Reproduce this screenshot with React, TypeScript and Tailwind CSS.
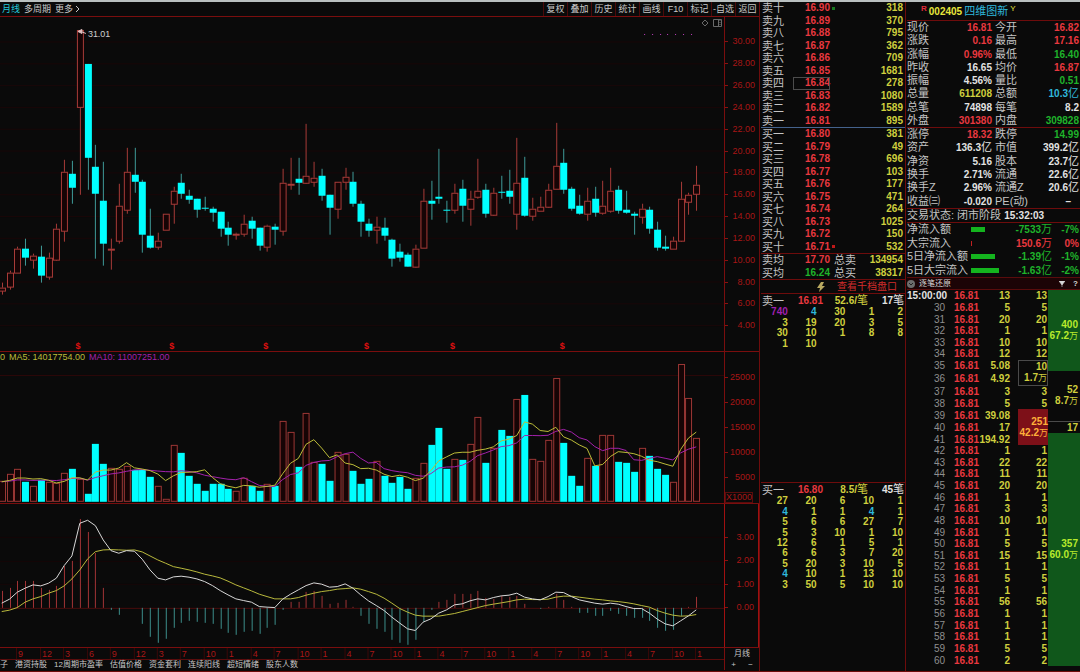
import React from "react";

const FONT = "font-['Liberation_Sans','Noto_Sans_CJK_SC',sans-serif]";

// x of the n-th monthly bar
const STEP = 7.815;
const barX = (i: number) => 1.7 + STEP * i;

// [up, high, body top, body bottom, low, volume height]
const candles: [number, number, number, number, number, number][] = [
  [1, 283, 288, 291, 295, 20],
  [1, 271, 273, 287, 290, 27],
  [1, 247, 249, 273, 273, 32],
  [0, 239, 249, 258, 266, 20],
  [1, 254, 256, 260, 269, 15],
  [0, 246, 257, 276, 283, 22],
  [1, 253, 258, 277, 280, 19],
  [1, 224, 229, 260, 261, 18],
  [1, 160, 172, 231, 242, 28],
  [0, 161, 174, 188, 204, 33],
  [1, 30, 30, 107, 195, 22],
  [0, 64, 64, 158, 190, 8],
  [0, 145, 167, 194, 259, 58],
  [0, 162, 201, 244, 266, 38],
  [1, 239, 249, 249, 270, 33],
  [1, 184, 206, 241, 244, 32],
  [1, 148, 172, 210, 214, 35],
  [0, 148, 175, 182, 193, 32],
  [0, 180, 182, 235, 253, 32],
  [0, 209, 236, 248, 249, 25],
  [1, 233, 241, 247, 250, 15],
  [1, 214, 214, 230, 230, 2],
  [1, 187, 191, 204, 224, 56],
  [0, 174, 183, 194, 199, 49],
  [0, 190, 196, 200, 204, 26],
  [0, 199, 199, 210, 218, 18],
  [0, 197, 208, 209, 211, 11],
  [0, 207, 209, 213, 222, 18],
  [0, 212, 212, 229, 237, 18],
  [0, 222, 228, 235, 246, 13],
  [1, 233, 234, 235, 240, 10],
  [1, 215, 224, 234, 237, 23],
  [0, 217, 221, 229, 239, 16],
  [0, 228, 228, 246, 251, 11],
  [1, 225, 226, 247, 252, 17],
  [0, 224, 227, 230, 245, 16],
  [1, 169, 183, 231, 236, 80],
  [1, 158, 184, 184, 190, 69],
  [0, 158, 179, 183, 195, 35],
  [1, 124, 176, 183, 184, 88],
  [1, 162, 178, 182, 187, 39],
  [0, 169, 176, 196, 201, 38],
  [0, 195, 195, 208, 235, 21],
  [1, 182, 182, 209, 219, 49],
  [1, 168, 177, 182, 190, 47],
  [0, 172, 182, 204, 207, 31],
  [0, 201, 204, 222, 237, 18],
  [0, 219, 224, 231, 237, 23],
  [1, 217, 227, 230, 244, 40],
  [0, 218, 228, 236, 241, 26],
  [0, 239, 240, 259, 267, 19],
  [0, 244, 252, 258, 262, 25],
  [0, 253, 255, 267, 267, 13],
  [1, 245, 249, 267, 268, 23],
  [1, 189, 201, 248, 248, 38],
  [0, 181, 201, 204, 220, 57],
  [0, 149, 197, 199, 204, 74],
  [0, 201, 210, 211, 223, 33],
  [1, 184, 193, 210, 214, 42],
  [0, 180, 189, 206, 222, 42],
  [1, 191, 199, 209, 226, 57],
  [1, 159, 191, 197, 199, 84],
  [0, 184, 190, 214, 218, 39],
  [1, 188, 193, 215, 216, 53],
  [0, 176, 192, 193, 199, 72],
  [0, 170, 191, 197, 204, 66],
  [1, 138, 183, 214, 230, 102],
  [0, 157, 178, 216, 217, 107],
  [1, 198, 209, 216, 221, 42],
  [1, 197, 207, 211, 211, 40],
  [1, 184, 190, 207, 208, 61],
  [1, 123, 166, 189, 189, 123],
  [0, 149, 163, 190, 194, 59],
  [0, 187, 189, 209, 211, 26],
  [0, 195, 206, 214, 215, 16],
  [1, 188, 201, 214, 221, 43],
  [0, 187, 199, 213, 217, 36],
  [1, 181, 206, 213, 215, 66],
  [1, 168, 191, 211, 213, 66],
  [0, 186, 190, 211, 214, 40],
  [0, 191, 210, 213, 214, 39],
  [0, 212, 214, 216, 235, 30],
  [1, 204, 209, 217, 224, 53],
  [0, 207, 210, 229, 234, 46],
  [0, 222, 230, 248, 251, 33],
  [0, 236, 247, 249, 251, 27],
  [1, 237, 241, 249, 249, 19],
  [1, 182, 199, 241, 242, 137],
  [1, 193, 195, 202, 215, 103],
  [1, 166, 185, 194, 211, 63],
];

const macd = [
  17, 20, 27, 27, 27, 20, 18, 22, 42, 47, 89, 76, 55, 20, -2, -7, 0, 0, -16, -29, -35, -31, -20, -15, -13, -14, -15,
  -16, -21, -25, -27, -24, -23, -26, -20, -17, -2, 6, 6, 16, 17, 12, 4, 5, 8, 1, -8, -16, -21, -24, -32, -35, -37, -32,
  -14, -2, 6, 8, 14, 14, 14, 17, 10, 9, 12, 11, 12, 4, 0, -1, 1, 14, 8, 1, -5, -5, -8, -8, -3, -6, -8, -10, -10, -13,
  -20, -23, -22, -8, 1, 11,
];

// DIF and DEA in thirds of a unit above the zero line
const dif = [
  14, 26, 47, 59, 69, 66, 74, 89, 127, 156, 254, 263, 247, 204, 172, 164, 172, 170, 146, 114, 89, 84, 93, 95, 92, 87,
  79, 67, 52, 39, 27, 22, 17, 4, 2, 1, 26, 41, 54, 67, 75, 71, 62, 64, 72, 59, 39, 21, 7, -8, -28, -46, -63, -68, -43,
  -33, -16, -6, 9, 12, 21, 27, 24, 31, 36, 38, 44, 32, 27, 24, 34, 47, 46, 34, 24, 19, 14, 11, 14, 11, 4, -2, -2, -16,
  -34, -48, -54, -39, -24, -6,
];
const dea = [
  -11, -7, 1, 17, 27, 34, 44, 52, 66, 87, 114, 147, 169, 174, 175, 174, 173, 174, 168, 156, 144, 134, 124, 119, 114,
  108, 101, 96, 90, 80, 69, 60, 51, 41, 34, 27, 27, 27, 31, 38, 44, 49, 52, 56, 58, 60, 56, 49, 41, 29, 14, -2, -13,
  -22, -25, -25, -25, -21, -17, -11, -5, 1, 7, 11, 15, 19, 24, 26, 25, 25, 26, 32, 35, 35, 32, 29, 26, 24, 21, 19, 16,
  12, 7, 2, -8, -16, -22, -25, -24, -20,
];

const months = ["9", "12", "3", "6", "9", "12", "3", "7", "10", "1", "4", "7", "10", "1", "4", "7", "10", "1", "4", "7", "10", "1", "4", "7", "10", "1", "4", "7", "10", "1"];

const volumes = candles.map((c) => c[5]);

function movingAverage(n: number) {
  return volumes.map((_, i) => {
    let sum = 0;
    for (let k = i - n + 1; k <= i; k++) sum += k < 0 ? 20 : volumes[k];
    return sum / n;
  });
}

const line = (ys: number[]) => ys.map((y, i) => `${barX(i).toFixed(1)},${y.toFixed(1)}`).join(" ");

const priceTicks = ["30.00", "28.00", "26.00", "24.00", "22.00", "20.00", "18.00", "16.00", "14.00", "12.00", "10.00", "8.00", "6.00", "4.00"];
const toolbar = ["复权", "叠加", "历史", "统计", "画线", "F10", "标记", "-自选", "返回"];
const indicators = ["港资持股", "12周期市盈率", "估值价格", "资金套利", "连续阳线", "超短情绪", "股东人数"];

const asks = [
  ["卖十", "16.90", "318"],
  ["卖九", "16.89", "370"],
  ["卖八", "16.88", "795"],
  ["卖七", "16.87", "362"],
  ["卖六", "16.86", "709"],
  ["卖五", "16.85", "1681"],
  ["卖四", "16.84", "278"],
  ["卖三", "16.83", "1080"],
  ["卖二", "16.82", "1589"],
  ["卖一", "16.81", "895"],
];
const bids = [
  ["买一", "16.80", "381"],
  ["买二", "16.79", "49"],
  ["买三", "16.78", "696"],
  ["买四", "16.77", "103"],
  ["买五", "16.76", "177"],
  ["买六", "16.75", "471"],
  ["买七", "16.74", "264"],
  ["买八", "16.73", "1025"],
  ["买九", "16.72", "150"],
  ["买十", "16.71", "532"],
];

const askQueue = [
  ["740", "4", "30", "1", "2"],
  ["3", "19", "20", "3", "5"],
  ["30", "10", "1", "8", "8"],
  ["1", "10", "", "", ""],
];
const bidQueue = [
  ["27", "20", "6", "10", "1"],
  ["4", "1", "1", "4", "1"],
  ["5", "6", "6", "27", "7"],
  ["5", "3", "10", "1", "10"],
  ["12", "6", "1", "5", "1"],
  ["6", "6", "3", "7", "20"],
  ["5", "20", "3", "10", "5"],
  ["4", "10", "1", "13", "10"],
  ["3", "50", "5", "10", "10"],
];

const RED = "text-[#e8383f]";
const GREEN = "text-[#1fb32a]";
const YELLOW = "text-[#cfcf3e]";
const WHITE = "text-[#e2e2e2]";
const CYAN = "text-[#2fb8dc]";
const LABEL = "text-[11px] font-normal text-[#c4c4c4]";

const quoteTop = [
  ["现价", "16.81", RED, "今开", "16.82", RED],
  ["涨跌", "0.16", RED, "最高", "17.16", RED],
  ["涨幅", "0.96%", RED, "最低", "16.40", GREEN],
  ["昨收", "16.65", WHITE, "均价", "16.87", RED],
  ["振幅", "4.56%", WHITE, "量比", "0.51", GREEN],
  ["总量", "611208", YELLOW, "总额", "10.3亿", CYAN],
  ["总笔", "74898", WHITE, "每笔", "8.2", WHITE],
  ["外盘", "301380", RED, "内盘", "309828", GREEN],
];
const quoteBottom = [
  ["涨停", "18.32", RED, "跌停", "14.99", GREEN],
  ["资产", "136.3亿", WHITE, "市值", "399.2亿", WHITE],
  ["净资", "5.16", WHITE, "股本", "23.7亿", WHITE],
  ["换手", "2.71%", WHITE, "流通", "22.6亿", WHITE],
  ["换手Z", "2.96%", WHITE, "流通Z", "20.6亿", WHITE],
  ["收益㈢", "-0.020", WHITE, "PE(动)", "–", `${WHITE} pr-2`],
];
const flows = [
  { label: "净流入额", bar: "w-3.5 bg-[#14b41e]", value: "-7533万", pct: "-7%", color: GREEN },
  { label: "大宗流入", bar: "w-px bg-[#c02020]", value: "150.6万", pct: "0%", color: RED },
  { label: "5日净流入额", bar: "w-6 bg-[#14b41e]", value: "-1.39亿", pct: "-1%", color: GREEN },
  { label: "5日大宗流入", bar: "w-7 bg-[#14b41e]", value: "-1.63亿", pct: "-2%", color: GREEN },
];

const ticks = [
  ["15:00:00", "13"], ["30", "5"], ["31", "20"], ["32", "1"], ["33", "10"], ["34", "12"], ["35", "5.08"], ["36", "4.92"],
  ["37", "3"], ["38", "5"], ["39", "39.08"], ["40", "17"], ["41", "194.92"], ["42", "1"], ["43", "22"], ["44", "11"],
  ["45", "20"], ["46", "1"], ["47", "3"], ["48", "10"], ["49", "1"], ["50", "5"], ["51", "15"], ["52", "1"],
  ["53", "5"], ["54", "1"], ["55", "56"], ["56", "1"], ["57", "1"], ["58", "1"], ["59", "5"], ["60", "2"],
];

type Block = { span: number; qty: string; amount: string; box: string };

// orders merged over several ticks, keyed by the row they start on
const merged: Record<number, Block> = {
  6: { span: 2, qty: "10", amount: "1.7万", box: "border border-[#4a4a4a]" },
  10: { span: 3, qty: "251", amount: "42.2万", box: "bg-[#7d1018] text-[#ffb03a]" },
};
const covered = [7, 11, 12];
const groups: Record<number, Block> = {
  0: { span: 7, qty: "400", amount: "67.2万", box: "bg-[#10571b] text-[#b8ea2c]" },
  7: { span: 4, qty: "52", amount: "8.7万", box: "border-b border-[#4a4a4a] text-[#cfcf3e]" },
  11: { span: 1, qty: "17", amount: "", box: "text-[#cfcf3e]" },
  12: { span: 20, qty: "357", amount: "60.0万", box: "bg-[#10571b] text-[#b8ea2c]" },
};

// digits stay bold, the trailing unit is drawn lighter
function Num({ children, unit = "text-[11px]" }: { children: string; unit?: string }) {
  const m = children.match(/^(.*?)([万亿笔]?)$/);
  return (
    <>
      {m ? m[1] : children}
      {m && m[2] && <span className={`font-normal ${unit}`}>{m[2]}</span>}
    </>
  );
}

function Axis({ labels, className }: { labels: string[]; className: string }) {
  return (
    <div className={`flex flex-col ${className}`}>
      {labels.map((l) => (
        <div key={l} className="flex flex-1 items-center justify-between pr-1 text-[9px] leading-none text-[#a81616]">
          <span className="h-px w-[3px] bg-[#8c1010]" />
          {l}
        </div>
      ))}
    </div>
  );
}

function PriceChart() {
  return (
    <svg className="block min-w-0 flex-1" viewBox="0 17 725 334" preserveAspectRatio="xMaxYMin meet" role="img" aria-label="月线">
      {priceTicks.map((t, i) => (
        <line key={t} x1="0" x2="725" y1={42 + i * 21.85} y2={42 + i * 21.85} stroke="#190708" />
      ))}
      {candles.map(([up, high, top, bottom, low], i) => {
        const x = Math.round(barX(i));
        const body = Math.max(bottom - top, 1);
        return up ? (
          <g key={i} stroke="#a83b38" fill="none">
            <path d={`M${x + 0.5} ${high}V${top}M${x + 0.5} ${bottom}V${low}`} />
            <rect x={x - 2.5} y={top + 0.5} width="6" height={body} fill="#160405" />
          </g>
        ) : (
          <g key={i}>
            <path d={`M${x + 0.5} ${high}V${low}`} stroke="#3f9c9a" />
            <rect x={x - 3} y={top} width="7" height={body} fill="#00ffff" />
          </g>
        );
      })}
      <path d="M78 31.5l4-2v4zM81 31.5l5 2" stroke="#e0c0c0" fill="#e0c0c0" />
      <text x="88" y="37" className="fill-[#cfcfcf] text-[9px]">31.01</text>
      {[0, 1, 2, 3, 4, 5, 6].map((k) => (
        <rect key={k} x={645 + Math.round(k * 7.8)} y="34" width="1" height="1" fill="#c040c0" />
      ))}
      <path d="M706 20l3 3-3 3-3-3z" fill="none" stroke="#6a6a6a" />
      <path d="M714.5 19.5h8v7h-8zM719.5 19.5v7" fill="none" stroke="#6a6a6a" />
      <path d="M721 20v6" stroke="#6a6a6a" strokeDasharray="1 1" />
      {[78, 172, 266, 367, 453, 563].map((x) => (
        <text key={x} x={x} y="349" textAnchor="middle" className="fill-[#e01010] text-[9px] font-bold">$</text>
      ))}
    </svg>
  );
}

function VolumeChart() {
  return (
    <svg className="block min-w-0 flex-1" viewBox="0 352 725 151" preserveAspectRatio="xMaxYMin meet" role="img" aria-label="成交量">
      <path d="M0 375.5H725" stroke="#2c0809" />
      {candles.map(([up, , , , , vol], i) => {
        const x = Math.round(barX(i));
        return up ? (
          <rect key={i} x={x - 2.5} y={502 - vol - 0.5} width="6" height={vol} fill="#160405" stroke="#9c3735" />
        ) : (
          <rect key={i} x={x - 3} y={502 - vol} width="7" height={vol} fill="#00ffff" />
        );
      })}
      <polyline points={line(movingAverage(10).map((v) => 502 - v))} fill="none" stroke="#a321ab" />
      <polyline points={line(movingAverage(5).map((v) => 502 - v))} fill="none" stroke="#bcbc38" />
    </svg>
  );
}

function MacdChart() {
  return (
    <svg className="block min-w-0 flex-1" viewBox="0 504 725 144" preserveAspectRatio="xMaxYMin meet" role="img" aria-label="MACD">
      <path d="M0 608.5H725" stroke="#4a0c0c" />
      <path d="M0 537.5H725M0 561.5H725M0 584.5H725" stroke="#150607" />
      {macd.map((v, i) => (
        <path key={i} d={`M${Math.round(barX(i)) + 0.5} 608V${608 - v}`} stroke={v > 0 ? "#a33436" : "#3c8f8c"} />
      ))}
      <polyline points={line(dea.map((v) => 608 - v / 3))} fill="none" stroke="#b9b93c" />
      <polyline points={line(dif.map((v) => 608 - v / 3))} fill="none" stroke="#d8d8d8" />
    </svg>
  );
}

function Charts() {
  return (
    <section className="flex min-w-0 flex-1 flex-col border-r border-[#6e0c0c]">
      <nav className="flex h-[15px] items-center border-b border-[#7a0e0e] text-[9px] leading-none">
        <div className="flex flex-1 gap-1 pl-0.5">
          <button className="text-[#22c8d8]">月线</button>
          <button>多周期</button>
          <button className="flex items-center gap-0.5">
            更多
            <svg className="h-2 w-1.5" viewBox="0 0 6 8" fill="none" stroke="#c8c8c8"><path d="M1 1l3 3-3 3" /></svg>
          </button>
        </div>
        {toolbar.map((t) => (
          <button key={t} className="h-full w-6 whitespace-nowrap border-l border-[#4a0a0a]">{t}</button>
        ))}
      </nav>
      <div className="flex border-b border-[#7a0e0e]">
        <PriceChart />
        <Axis labels={priceTicks} className="w-[35px] border-l border-[#7a0e0e] py-3.5" />
      </div>
      <div className="relative flex border-b border-[#7a0e0e]">
        <p className="absolute left-0 top-0 flex gap-1 text-[9px] leading-[11px] text-[#bcbc38]">
          <span>0</span>
          <span>MA5: 14017754.00</span>
          <span className="text-[#a321ab]">MA10: 11007251.00</span>
        </p>
        <VolumeChart />
        <div className="w-[35px] border-l border-[#7a0e0e] pt-3.5">
          <Axis labels={["25000", "20000", "15000", "10000", "5000"]} className="h-[124px]" />
          <p className="mt-0.5 w-[28px] border border-[#5a0c0c] text-[9px] leading-[9px] text-[#a81616]">X1000</p>
        </div>
      </div>
      <div className="flex border-b border-[#7a0e0e]">
        <MacdChart />
        <Axis labels={["3.00", "2.00", "1.00", "0.00"]} className="w-[35px] border-x border-[#a01010] pt-[22px] pb-7" />
      </div>
      <div className="flex">
        <div className="min-w-0 flex-1">
          <svg className="block w-full" viewBox="0 0 725 11" preserveAspectRatio="xMaxYMin meet">
            {months.map((m, k) => (
              <g key={k}>
                <path d={`M${Math.round(barX(2 + 3 * k)) - 0.5} 0V11`} stroke="#3a0808" />
                <text x={Math.round(barX(2 + 3 * k)) + 1} y="9" className="fill-[#a81616] text-[9px]">{m}</text>
              </g>
            ))}
          </svg>
          <div className="flex h-[11px] items-center gap-[7px] whitespace-nowrap border-t border-[#5a0c0c] text-[8px] leading-none">
            <button>子</button>
            {indicators.map((t) => (
              <button key={t}>{t}</button>
            ))}
          </div>
        </div>
        <div className="flex w-[35px] flex-col items-center border-l border-[#7a0e0e] text-[8px] leading-none">
          <button className="flex-1">月线</button>
          <div className="flex w-full flex-1 justify-around">
            <button aria-label="放大">+</button>
            <button aria-label="缩小">−</button>
          </div>
        </div>
      </div>
    </section>
  );
}

function BookRows({ rows }: { rows: string[][] }) {
  return (
    <table className="h-[125px] w-full table-fixed border-collapse">
      <tbody>
        {rows.map(([label, price, qty]) => (
          <tr key={label}>
            <th className={`w-8 p-0 pl-px text-left leading-[10px] ${LABEL}`}>{label}</th>
            <td className={`w-[37px] p-0 text-right ${RED} ${price === "16.84" ? "outline outline-[#4c4c4c] -outline-offset-1" : ""}`}>{price}</td>
            <td className="w-2 p-0 pl-0.5">
              {price === "16.90" && <span className="block size-[3px] bg-[#167a20]" />}
              {price === "16.71" && <span className="block size-[3px] bg-[#c01818]" />}
            </td>
            <td className={`p-0 pr-0.5 text-right ${YELLOW}`}>{qty}</td>
          </tr>
        ))}
      </tbody>
    </table>
  );
}

type QueueProps = { side: string; price: string; avg: string; count: string; rows: string[][]; height: string };

function Queue({ side, price, avg, count, rows, height }: QueueProps) {
  return (
    <>
      <header className="flex h-3.5 items-center border-t border-[#6e0c0c]">
        <span className={`w-8 pl-px ${LABEL}`}>{side}</span>
        <span className={`w-[30px] text-right ${RED}`}>{price}</span>
        <span className={`w-[45px] text-right ${YELLOW}`}><Num>{avg}</Num></span>
        <span className={`flex-1 pr-px text-right ${WHITE}`}><Num>{count}</Num></span>
      </header>
      <table className={`w-full table-fixed border-collapse ${height}`}>
        <tbody>
          {rows.map((r, i) => (
            <tr key={i}>
              {r.map((v, k) => (
                <td key={k} className={`p-0 pr-0.5 text-right ${v === "740" ? "text-[#a020b0]" : v === "4" ? CYAN : YELLOW}`}>{v}</td>
              ))}
            </tr>
          ))}
        </tbody>
      </table>
    </>
  );
}

function OrderBook() {
  return (
    <section className="flex w-[146px] shrink-0 flex-col border-r border-[#6e0c0c] pl-px text-[10px] font-bold leading-[10px]">
      <BookRows rows={asks} />
      <div className="h-px bg-[#44628c]" />
      <BookRows rows={bids} />
      <dl className="grid h-[26px] grid-cols-[32px_37px_32px_1fr] items-center border-t border-[#6e0c0c] text-right">
        <dt className={`pl-px text-left ${LABEL}`}>卖均</dt>
        <dd className={RED}>17.70</dd>
        <dt className={`pl-1 text-left ${LABEL}`}>总卖</dt>
        <dd className={`pr-0.5 ${YELLOW}`}>134954</dd>
        <dt className={`pl-px text-left ${LABEL}`}>买均</dt>
        <dd className={GREEN}>16.24</dd>
        <dt className={`pl-1 text-left ${LABEL}`}>总买</dt>
        <dd className={`pr-0.5 ${YELLOW}`}>38317</dd>
      </dl>
      <a href="#depth" className="flex h-3.5 items-center justify-end gap-3 border-t border-[#6e0c0c] pr-2 font-normal text-[#d02c2c]">
        <svg className="h-2.5 w-2" viewBox="0 0 8 10"><path d="M4 0L0 6h3L2 10l6-6H5l2-4z" fill="#b8a860" /></svg>
        查看千档盘口
      </a>
      <div className="h-[189px]">
        <Queue side="卖一" price="16.81" avg="52.6/笔" count="17笔" rows={askQueue} height="h-[42px]" />
      </div>
      <div className="flex-1">
        <Queue side="买一" price="16.80" avg="8.5/笔" count="45笔" rows={bidQueue} height="h-[94px]" />
      </div>
    </section>
  );
}

function QuoteRows({ rows, className }: { rows: string[][]; className: string }) {
  return (
    <dl className={`grid grid-cols-[30px_55px_36px_1fr] items-center border-t border-[#6e0c0c] pr-px ${className}`}>
      {rows.map(([a, av, ac, b, bv, bc]) => (
        <React.Fragment key={a}>
          <dt className={`whitespace-nowrap ${LABEL}`}>{a}</dt>
          <dd className={`text-right ${ac}`}><Num>{av}</Num></dd>
          <dt className={`whitespace-nowrap pl-[3px] ${LABEL}`}>{b}</dt>
          <dd className={`text-right ${bc}`}><Num>{bv}</Num></dd>
        </React.Fragment>
      ))}
    </dl>
  );
}

function Ticks() {
  return (
    <table className="h-[376px] w-full table-fixed border-collapse text-right">
      <colgroup>
        <col className="w-10" />
        <col className="w-8" />
        <col className="w-[31px]" />
        <col />
        <col className="w-8" />
      </colgroup>
      <tbody>
        {ticks.map(([time, qty], i) => {
          const m = merged[i];
          const g = groups[i];
          return (
            <tr key={time}>
              <td className={`p-0 ${i === 0 ? WHITE : "pr-0.5 font-normal text-[#8f8f8f]"}`}>{time}</td>
              <td className={`p-0 ${RED}`}>16.81</td>
              <td className={`p-0 ${YELLOW}`}>{qty}</td>
              {!covered.includes(i) && (
                <td rowSpan={m ? m.span : 1} className={`p-0 ${m ? "h-px pl-2" : "pr-px"} ${YELLOW}`}>
                  {m ? (
                    <div className={`flex h-full flex-col items-end justify-center whitespace-nowrap ${m.box}`}>
                      <span>{m.qty}</span>
                      <span><Num unit="text-[9px]">{m.amount}</Num></span>
                    </div>
                  ) : (
                    qty
                  )}
                </td>
              )}
              {g && (
                <td rowSpan={g.span} className={`p-0 ${g.box}`}>
                  <div className="flex flex-col items-end whitespace-nowrap pr-0.5">
                    <span>{g.qty}</span>
                    {g.amount && <span><Num unit="text-[9px]">{g.amount}</Num></span>}
                  </div>
                </td>
              )}
            </tr>
          );
        })}
      </tbody>
    </table>
  );
}

function Quote() {
  return (
    <section className="flex w-[174px] shrink-0 flex-col pl-px text-[10px] font-bold leading-[11px]">
      <h1 className="flex h-[18px] items-center pl-3.5">
        <span className="mr-0.5 self-start pt-0.5 text-[8px] leading-[9px] text-[#e02c3c]">R</span>
        <span className="mr-0.5 text-[#e6e63c]">002405</span>
        <span className={`text-[11px] font-normal ${CYAN}`}>四维图新</span>
        <span className="ml-0.5 self-start pt-0.5 text-[8px] font-normal leading-[9px] text-[#e6e63c]">Y</span>
      </h1>
      <QuoteRows rows={quoteTop} className="h-[107px]" />
      <QuoteRows rows={quoteBottom} className="h-[81px]" />
      <p className={`flex h-3.5 items-center gap-[3px] border-t border-[#6e0c0c] ${WHITE}`}>
        <span className={LABEL}>交易状态: 闭市阶段</span>
        15:32:03
      </p>
      <dl className="grid h-[55px] grid-cols-[64px_30px_1fr_28px] items-center border-t border-[#6e0c0c] text-right">
        {flows.map((f) => (
          <React.Fragment key={f.label}>
            <dt className={`whitespace-nowrap text-left ${LABEL}`}>{f.label}</dt>
            <dd><span className={`block h-[5px] ${f.bar}`} /></dd>
            <dd className={f.color}><Num>{f.value}</Num></dd>
            <dd className={`pr-px ${f.color}`}>{f.pct}</dd>
          </React.Fragment>
        ))}
      </dl>
      <header className="flex h-[13px] items-center gap-1 border-y border-[#5a0c0c] bg-[#1c0406] pr-0.5 text-[8px] font-normal leading-none text-[#d8d8d8]">
        <svg className="size-2" viewBox="0 0 8 8"><circle cx="4" cy="4" r="4" fill="#6c6c6c" /><path d="M2 3l2 2 2-2" fill="none" stroke="#222" /></svg>
        <span className="flex-1">逐笔还原</span>
        <button aria-label="筛选">
          <svg className="h-1.5 w-1.5" viewBox="0 0 6 6"><path d="M0 0h6L3 4zM3 3v3" fill="#d8d8d8" stroke="#d8d8d8" strokeWidth=".6" /></svg>
        </button>
        <button className="pl-1 font-bold">?</button>
      </header>
      <Ticks />
    </section>
  );
}

export default function App() {
  return (
    <main className={`flex min-h-screen border-t-2 border-b border-t-[#b9c0c0] border-b-[#6e0c0c] bg-[#0a0a0a] text-[#c8c8c8] ${FONT}`}>
      <Charts />
      <OrderBook />
      <Quote />
    </main>
  );
}
